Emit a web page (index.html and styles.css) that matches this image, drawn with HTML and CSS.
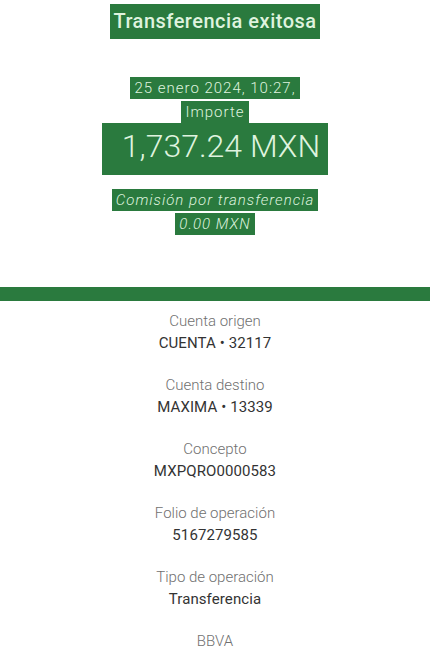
FILE: index.html
```html
<!DOCTYPE html>
<html>
<head>
  <title>Transferencia exitosa</title>
  <link rel="stylesheet" href="styles.css">
</head>
<body>
  <div id="summary">
    <h1><span class="hl">Transferencia exitosa</span></h1>
    <div class="line date"><span class="hl">25 enero 2024, 10:27,</span></div>
    <div class="line"><span class="hl">Importe</span></div>
    <div class="amount"><span class="hl">1,737.24 MXN</span></div>
    <div class="line fee"><span class="hl">Comisión por transferencia</span></div>
    <div class="line fee"><span class="hl">0.00 MXN</span></div>
  </div>
  <div class="bar"></div>
  <div id="details">
    <div class="item"><div class="label">Cuenta origen</div><div class="value">CUENTA • 32117</div></div>
    <div class="item"><div class="label">Cuenta destino</div><div class="value">MAXIMA • 13339</div></div>
    <div class="item"><div class="label">Concepto</div><div class="value">MXPQRO0000583</div></div>
    <div class="item"><div class="label">Folio de operación</div><div class="value">5167279585</div></div>
    <div class="item"><div class="label">Tipo de operación</div><div class="value">Transferencia</div></div>
    <div class="item"><div class="label">BBVA</div></div>
  </div>
</body>
</html>
```

FILE: styles.css
```css
body { margin: 0; background: #fff; font-family: Roboto, "Open Sans", sans-serif; text-align: center; overflow: hidden; }
.hl { background-color: #2a7a3e; color: #dff3df; padding: 0 4px; }
#summary { padding: 0 0 51px; }
h1 { margin: 0; font-size: 20px; font-weight: 500; letter-spacing: 0.5px; line-height: 32px; padding: 5px 0 0; }
h1 .hl { padding: 5px 3px 6px; }
.line { font-size: 15px; font-weight: 300; line-height: 24px; letter-spacing: 1px; }
.line .hl { padding: 2px 4px; }
.date { margin-top: 39px; }
.amount { font-size: 32px; font-weight: 300; line-height: 44px; margin-bottom: 20px; }
.amount .hl { padding: 4px 8px 10px 20px; }
.fee { font-style: italic; }
.bar { height: 14px; background-color: #2a7a3e; }
#details { padding-top: 9px; }
.item { margin-bottom: 20px; }
.label { font-size: 15px; font-weight: 300; color: #707070; line-height: 22px; }
.value { font-size: 15px; font-weight: 400; color: #333; line-height: 22px; letter-spacing: 0.1px; }
```
